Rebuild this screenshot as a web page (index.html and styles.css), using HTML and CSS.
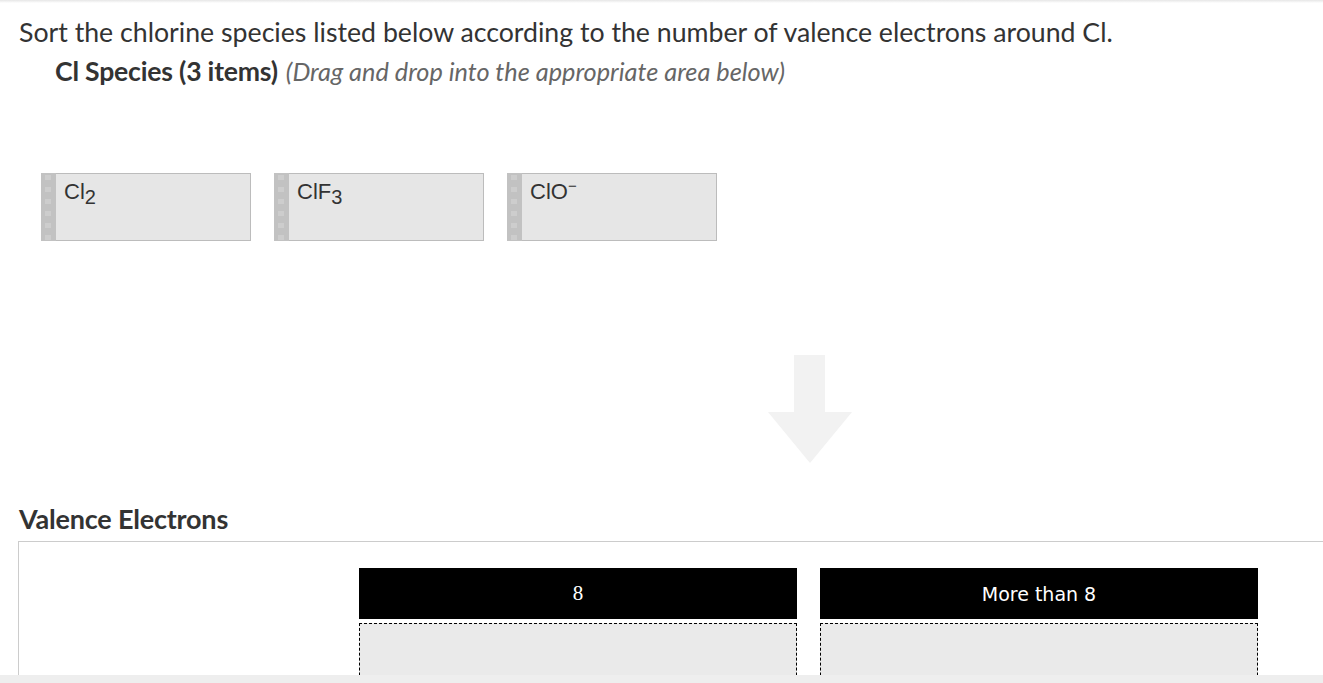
FILE: index.html
```html
<!DOCTYPE html>
<html>
<head>
<meta charset="utf-8">
<link rel="stylesheet" href="styles.css">
</head>
<body>
<div class="page">
  <div class="topshadow"></div>
  <h1 class="question">Sort the chlorine species listed below according to the number of valence electrons around Cl.</h1>
  <div class="source-head"><span class="source-title">Cl Species (3 items)</span><span class="source-hint">(Drag and drop into the appropriate area below)</span></div>
  <div class="items">
    <div class="item"><div class="handle"></div><div class="label">Cl<sub>2</sub></div></div>
    <div class="item"><div class="handle"></div><div class="label">ClF<sub>3</sub></div></div>
    <div class="item"><div class="handle"></div><div class="label">ClO<sup>−</sup></div></div>
  </div>
  <div class="arrow-row">
    <svg class="arrow" width="84" height="108" viewBox="0 0 84 108">
      <path d="M26 0 H57 V57 H84 L42 108 L0 57 H26 Z" fill="#f2f2f2"/>
    </svg>
  </div>
  <h2 class="target-title">Valence Electrons</h2>
  <div class="target">
    <div class="bin">
      <div class="bin-head serif">8</div>
      <div class="bin-drop"></div>
    </div>
    <div class="bin">
      <div class="bin-head">More than 8</div>
      <div class="bin-drop"></div>
    </div>
  </div>
</div>
<div class="bottombar"></div>
</body>
</html>
```
FILE: styles.css
```css
html, body {
  margin: 0;
  padding: 0;
  background: #fff;
  overflow: hidden;
}
body {
  width: 1323px;
  height: 683px;
  position: relative;
  font-family: Lato, "Open Sans", sans-serif;
  color: #333;
}
.page {
  height: 675px;
  overflow: hidden;
}
.topshadow {
  height: 3px;
  background: linear-gradient(#e6e6e6, #fff);
}
.question {
  margin: 12px 0 0 19px;
  font-size: 26.7px;
  font-weight: 400;
  line-height: 34px;
  color: #333;
  white-space: nowrap;
}
.source-head {
  margin: 7px 0 0 55px;
  line-height: 30px;
  white-space: nowrap;
}
.source-title {
  font-weight: 700;
  font-size: 26.6px;
  letter-spacing: -0.2px;
  color: #333;
}
.source-hint {
  font-style: italic;
  font-size: 25.3px;
  color: #666;
  margin-left: 8px;
}
.items {
  display: flex;
  gap: 23px;
  margin: 83px 0 0 41px;
}
.item {
  width: 210px;
  height: 68px;
  box-sizing: border-box;
  border: 1px solid #bcbcbc;
  background: #e6e6e6;
  display: flex;
}
.handle {
  width: 15px;
  margin: -1px 0 -1px -1px;
  background: repeating-linear-gradient(to bottom, #c2c2c2 0px, #c2c2c2 2px, transparent 2px, transparent 7px, #c2c2c2 7px, #c2c2c2 12px) 0 0 / 15px 100%,
              linear-gradient(to right, #c2c2c2 0, #c2c2c2 4px, #cdcdcd 4px, #cdcdcd 10px, #c2c2c2 10px);
}
.label {
  font-family: "Liberation Sans", Arial, sans-serif;
  font-size: 22px;
  color: #333;
  padding: 5px 0 0 8px;
  line-height: 26px;
}
.label sub {
  font-size: 20px;
  vertical-align: -5px;
  line-height: 0;
}
.label sup {
  font-size: 15px;
  vertical-align: 8px;
  line-height: 0;
}
.arrow-row {
  display: flex;
  justify-content: center;
  padding-left: 297px;
  margin-top: 114px;
  height: 108px;
}
.target-title {
  margin: 41px 0 0 19px;
  font-size: 27px;
  font-weight: 700;
  letter-spacing: -0.2px;
  line-height: 30px;
  color: #333;
}
.target {
  margin: 7px 0 0 18px;
  width: 1340px;
  height: 200px;
  box-sizing: border-box;
  border: 1px solid #cccccc;
  border-right: none;
  display: flex;
  gap: 23px;
  padding: 26px 0 0 340px;
}
.bin {
  width: 438px;
  display: flex;
  flex-direction: column;
  gap: 4px;
}
.bin-head {
  height: 51px;
  background: #000;
  color: #fff;
  display: flex;
  align-items: center;
  justify-content: center;
  font-family: "DejaVu Sans", sans-serif;
  font-size: 19px;
}
.bin-head.serif {
  font-family: "Liberation Serif", serif;
  font-size: 21px;
}
.bin-drop {
  height: 100px;
  border: 1px dashed #000;
  background: #eaeaea;
}
.bottombar {
  position: absolute;
  left: 0;
  bottom: 0;
  width: 100%;
  height: 8px;
  background: #eeeeee;
}
```
